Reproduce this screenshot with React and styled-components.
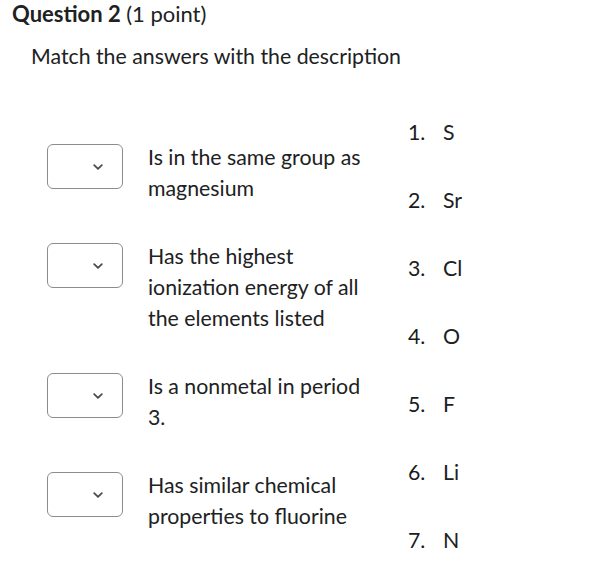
import React from 'react'
import styled, { createGlobalStyle } from 'styled-components'

const GlobalStyle = createGlobalStyle`
  body {
    margin: 0;
    background: #ffffff;
    font-family: Lato, "Noto Sans", sans-serif;
    color: #202122;
  }
`

const Wrapper = styled.section`
  width: 592px;
  min-height: 575px;
  box-sizing: border-box;
  padding: 2px 0 0 12px;
`

const Title = styled.h2`
  margin: 0;
  font-size: 22px;
  line-height: 24px;
  font-weight: 700;
  color: #202122;

  span {
    font-weight: 400;
  }
`

const Prompt = styled.p`
  margin: 18px 0 0 19px;
  font-size: 21.3px;
  line-height: 24px;
`

const Matching = styled.div`
  display: flex;
  align-items: flex-start;
  margin-top: 49px;
  margin-left: 35px;
`

const Choices = styled.div`
  display: flex;
  flex-direction: column;
  gap: 37px;
  padding-top: 25px;
  width: 361px;
`

const Row = styled.div`
  display: flex;
  align-items: flex-start;
  gap: 25px;
`

const Select = styled.div`
  width: 76px;
  height: 45px;
  margin-top: 2px;
  box-sizing: border-box;
  border: 1px solid #8a8c8e;
  border-radius: 6px;
  background: #fff;
  display: flex;
  align-items: center;
  justify-content: flex-end;
  padding-right: 19px;
  flex-shrink: 0;
`

const Description = styled.div`
  width: 222px;
  font-size: 21.3px;
  line-height: 31px;
`

const Answers = styled.ol`
  list-style: none;
  margin: 0;
  padding: 0;
  display: flex;
  flex-direction: column;
  gap: 37px;
`

const Answer = styled.li`
  display: flex;
  font-size: 21.3px;
  line-height: 31px;
`

const Num = styled.span`
  width: 35px;
  color: #1a1b1c;
`

const Chevron = () => (
  <svg width="10" height="6" viewBox="0 0 10 6" fill="none">
    <path d="M1.2 1.2 L5 4.8 L8.8 1.2" stroke="#494c4e" strokeWidth="1.8" strokeLinecap="round" strokeLinejoin="round" />
  </svg>
)

const rows = [
  'Is in the same group as magnesium',
  'Has the highest ionization energy of all the elements listed',
  'Is a nonmetal in period 3.',
  'Has similar chemical properties to fluorine',
]

const answers = ['S', 'Sr', 'Cl', 'O', 'F', 'Li', 'N']

const App = () => (
  <Wrapper>
    <GlobalStyle />
    <Title>
      Question 2 <span>(1 point)</span>
    </Title>
    <Prompt>Match the answers with the description</Prompt>
    <Matching>
      <Choices>
        {rows.map((text) => (
          <Row key={text}>
            <Select>
              <Chevron />
            </Select>
            <Description>{text}</Description>
          </Row>
        ))}
      </Choices>
      <Answers>
        {answers.map((a, i) => (
          <Answer key={a}>
            <Num>{i + 1}.</Num>
            {a}
          </Answer>
        ))}
      </Answers>
    </Matching>
  </Wrapper>
)

export default App
